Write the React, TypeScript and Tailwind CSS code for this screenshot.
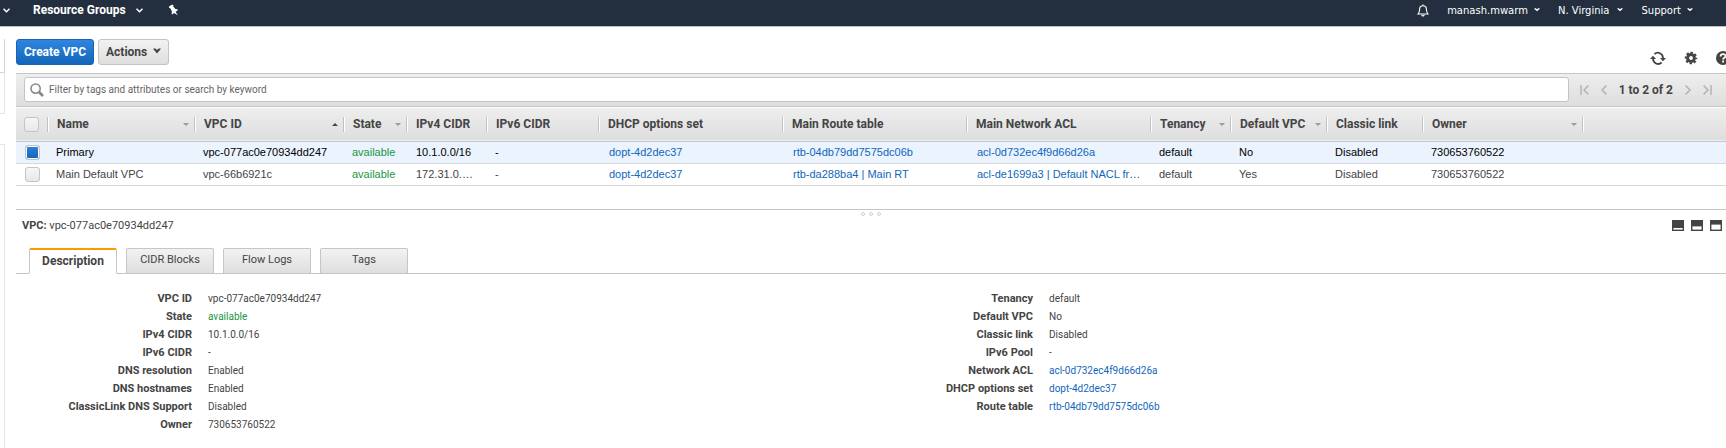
import type { ReactNode } from "react";

const link = "text-[#1166bb] hover:underline";

function Chevron({ className = "" }: { className?: string }) {
  return (
    <svg viewBox="0 0 7 5" className={`h-[5px] w-[7px] ${className}`} fill="none" stroke="currentColor" strokeWidth="1.5" aria-hidden="true">
      <path d="M0.5 0.8 L3.5 3.8 L6.5 0.8" />
    </svg>
  );
}

function TopNav() {
  return (
    <header className="flex h-[27px] items-start border-b border-[#bfbfbf] bg-[#232f3e] pr-[33px] pl-[3px] text-white">
      <nav className="flex h-5 flex-1 items-center">
        <button aria-label="Services" className="flex"><Chevron /></button>
        <button className="ml-[23px] flex items-center gap-[10px] text-[12px] leading-5 font-bold">
          Resource Groups
          <Chevron />
        </button>
        <button aria-label="Pin shortcuts" className="ml-[25px]">
          <svg viewBox="0 0 11 12" className="h-3 w-[11px]" fill="currentColor" aria-hidden="true">
            <path d="M1 2.6 L4.2 0.4 L5.6 1.4 L5.2 2.4 L7.4 5 L9.4 5.2 L9.8 6.2 L7.6 7.8 L9.8 11.2 L6 8.9 L4.2 10.4 L3.6 9.8 L3.9 7.6 L2.3 4.3 L1.1 4 Z" />
          </svg>
        </button>
      </nav>
      <div className="flex h-5 items-center font-['DejaVu_Sans'] text-[10px]">
        <button aria-label="Notifications" className="mr-[18px]">
          <svg viewBox="0 0 12 13" className="h-[13px] w-3" fill="none" stroke="currentColor" strokeWidth="1.1" aria-hidden="true">
            <path d="M6 0.4 V1.6 M1 10 C2.3 8.6 2.6 7.6 2.6 5.2 C2.6 3 4 1.7 6 1.7 C8 1.7 9.4 3 9.4 5.2 C9.4 7.6 9.7 8.6 11 10 Z M4.8 10.8 C5 12.2 7 12.2 7.2 10.8" />
          </svg>
        </button>
        <button className="mr-[18px] flex items-center gap-[6px]">manash.mwarm<Caret /></button>
        <button className="mr-[18px] flex items-center gap-2">N. Virginia<Caret /></button>
        <button className="flex items-center gap-[6px]">Support<Caret /></button>
      </div>
    </header>
  );
}

function Caret() {
  return (
    <svg viewBox="0 0 6 4" className="h-1 w-[6px]" fill="currentColor" aria-hidden="true">
      <path d="M0.4 0.2 H1.8 L3 1.2 L4.2 0.2 H5.6 V0.9 L3 3.2 L0.4 0.9 Z" />
    </svg>
  );
}

function SideRail() {
  return (
    <aside className="flex w-[5px] shrink-0 flex-col">
      <div className="mt-3 h-[34px] border-r border-b border-[#d5d5d5]" />
      <div className="h-[41px] border-r border-b border-[#e4e4e4]" />
      <div className="mt-[30px] flex-1 border-t border-r border-[#e4e4e4]" />
    </aside>
  );
}

function Toolbar() {
  return (
    <div className="flex items-start pt-3 font-bold">
      <button className="h-[26px] rounded-[3px] border border-[#1a62b5] bg-linear-to-b from-[#2f86de] to-[#1166bb] px-[7px] text-[12px] text-white">
        Create VPC
      </button>
      <button className="ml-1 flex h-[26px] items-center gap-[6px] rounded-[3px] border border-[#c4c4c4] bg-linear-to-b from-[#f2f2f2] to-[#dedede] px-[7px] text-[12px] text-[#444]">
        Actions
        <svg viewBox="0 0 8 6" className="mb-[2px] h-[6px] w-2" fill="currentColor" aria-hidden="true">
          <path d="M0.4 0.4 H2.4 L4 2 L5.6 0.4 H7.6 V1.2 L4 5.4 L0.4 1.2 Z" />
        </svg>
      </button>
      <div className="-mr-[4px] ml-auto flex items-center gap-[18px] pt-3 text-[#444]">
        <button aria-label="Refresh">
          <svg viewBox="0 0 16 14" className="h-[14px] w-4" fill="none" stroke="currentColor" strokeWidth="1.8" aria-hidden="true">
            <path d="M4.4 3.2 A5 5 0 0 1 12.9 7 M11.6 11.5 A5 5 0 0 1 3.1 7.6" />
            <path d="M10 7 H16 L13 10.2 Z M0 8 H6 L3 4.8 Z" fill="currentColor" stroke="none" />
          </svg>
        </button>
        <button aria-label="Settings">
          <svg viewBox="0 0 14 14" className="h-[14px] w-[14px]" fill="none" stroke="currentColor" aria-hidden="true">
            <circle cx="7" cy="7" r="3.4" strokeWidth="3" />
            <circle cx="7" cy="7" r="5.4" strokeWidth="1.8" strokeDasharray="2.4 1.841" strokeDashoffset="1.2" />
          </svg>
        </button>
        <button aria-label="Help">
          <svg viewBox="0 0 14 14" className="h-[14px] w-[14px]" aria-hidden="true">
            <circle cx="7" cy="7" r="7" fill="currentColor" />
            <path d="M4.6 5.4 C4.6 2.4 9.6 2.4 9.5 5.2 C9.4 6.8 7.1 6.9 7.1 8.6 M7.1 9.6 V11.4" fill="none" stroke="#fff" strokeWidth="1.8" />
          </svg>
        </button>
      </div>
    </div>
  );
}

function PageIcon({ d, label, wide }: { d: string; label: string; wide?: boolean }) {
  return (
    <button aria-label={label} className="text-[#b4b4b4]">
      <svg viewBox={wide ? "0 0 9 10" : "0 0 6 10"} className={wide ? "h-[10px] w-[9px]" : "h-[10px] w-[6px]"} fill="none" stroke="currentColor" strokeWidth="1.5" aria-hidden="true">
        <path d={d} />
      </svg>
    </button>
  );
}

function FilterBar() {
  return (
    <div className="mt-2 flex h-[34px] items-center border-y border-[#c6c6c6] bg-linear-to-b from-[#eeeeee] to-[#dedede] pr-[14px] pb-px pl-2">
      <label className="flex h-[25px] flex-1 items-center rounded-[3px] border border-[#c4c4c4] bg-white pl-[5px]">
        <svg viewBox="0 0 14 14" className="h-[14px] w-[14px] text-[#888]" fill="none" stroke="currentColor" aria-hidden="true">
          <circle cx="5.6" cy="5.6" r="4.6" strokeWidth="1.6" />
          <path d="M9 9 L13 13" strokeWidth="2.6" />
        </svg>
        <input
          aria-label="Filter VPCs"
          placeholder="Filter by tags and attributes or search by keyword"
          className="ml-[5px] min-w-0 flex-1 bg-transparent text-[10px] outline-none placeholder:text-[#666]"
        />
      </label>
      <div className="ml-[11px] flex items-center text-[12px] font-bold text-[#444]">
        <PageIcon label="First page" wide d="M1 0 V10 M8.4 0.6 L4 5 L8.4 9.4" />
        <span className="w-3" />
        <PageIcon label="Previous page" d="M5.4 0.6 L1 5 L5.4 9.4" />
        <span className="mx-3">1 to 2 of 2</span>
        <PageIcon label="Next page" d="M0.6 0.6 L5 5 L0.6 9.4" />
        <span className="w-3" />
        <PageIcon label="Last page" wide d="M8 0 V10 M0.6 0.6 L5 5 L0.6 9.4" />
      </div>
    </div>
  );
}

type Column = { title: string; width: string; pad: string; sort?: "asc" | "none" };

const columns: Column[] = [
  { title: "Name", width: "w-[147px]", pad: "pr-2 pl-[7px]", sort: "none" },
  { title: "VPC ID", width: "w-[149px]", pad: "pr-2 pl-[7px]", sort: "asc" },
  { title: "State", width: "w-[63px]", pad: "pr-2 pl-[7px]", sort: "none" },
  { title: "IPv4 CIDR", width: "w-[80px]", pad: "pr-[14px] pl-2" },
  { title: "IPv6 CIDR", width: "w-[112px]", pad: "pr-2 pl-[7px]" },
  { title: "DHCP options set", width: "w-[184px]", pad: "pr-2 pl-[9px]" },
  { title: "Main Route table", width: "w-[184px]", pad: "pr-2 pl-[9px]" },
  { title: "Main Network ACL", width: "w-[184px]", pad: "pr-2 pl-[9px]" },
  { title: "Tenancy", width: "w-[80px]", pad: "pr-2 pl-[7px]", sort: "none" },
  { title: "Default VPC", width: "w-[96px]", pad: "pr-2 pl-[7px]", sort: "none" },
  { title: "Classic link", width: "w-[96px]", pad: "pr-2 pl-[7px]" },
  { title: "Owner", width: "w-[160px]", pad: "pr-2 pl-[7px]", sort: "none" },
];

const A = ({ children }: { children: ReactNode }) => <a href="#" className={link}>{children}</a>;
const available = <span className="text-[#1a9641]">available</span>;

const rows: { selected: boolean; cells: ReactNode[] }[] = [
  {
    selected: true,
    cells: ["Primary", "vpc-077ac0e70934dd247", available, "10.1.0.0/16", "-", <A>dopt-4d2dec37</A>, <A>rtb-04db79dd7575dc06b</A>, <A>acl-0d732ec4f9d66d26a</A>, "default", "No", "Disabled", "730653760522"],
  },
  {
    selected: false,
    cells: ["Main Default VPC", "vpc-66b6921c", available, "172.31.0.0/16", "-", <A>dopt-4d2dec37</A>, <A>rtb-da288ba4 | Main RT</A>, <A>acl-de1699a3 | Default NACL from</A>, "default", "Yes", "Disabled", "730653760522"],
  },
];

function Check({ label, checked }: { label: string; checked?: boolean }) {
  return (
    <input
      type="checkbox"
      aria-label={label}
      defaultChecked={checked}
      className="block h-[15px] w-[15px] appearance-none rounded-[3px] border border-[#c4c4c4] bg-linear-to-b from-[#f6f6f6] to-[#e8e8e8] checked:from-[#2f80d8] checked:to-[#1166bb] checked:shadow-[inset_0_0_0_1px_#fff]"
    />
  );
}

function VpcTable() {
  return (
    <table className="mt-px w-full table-fixed border-collapse font-['Liberation_Sans'] text-[11px] text-[#444]">
      <thead>
        <tr className="h-[33px] border-b border-[#c6c6c6] bg-linear-to-b from-[#eeeeee] to-[#dedede] font-['Roboto']">
          <th className="w-[33px] p-0">
            <div className="flex h-[15px] items-center border-r border-white pl-2 shadow-[inset_-1px_0_0_#c0c0c0]">
              <Check label="Select all" />
            </div>
          </th>
          {columns.map((c) => (
            <th key={c.title} className={`p-0 text-left ${c.width}`}>
              <div className="flex h-[15px] items-center justify-between border-r border-white pr-[6px] pl-2 text-[12px] font-bold whitespace-nowrap shadow-[inset_-1px_0_0_#c0c0c0]">
                {c.title}
                {c.sort && (
                  <svg viewBox="0 0 6 3" className={c.sort === "asc" ? "h-[3px] w-[6px] text-[#444]" : "h-[3px] w-[6px] text-[#999]"} fill="currentColor" aria-hidden="true">
                    <path d={c.sort === "asc" ? "M0 3 L3 0 L6 3 Z" : "M0 0 L3 3 L6 0 Z"} />
                  </svg>
                )}
              </div>
            </th>
          ))}
          <th className="p-0" />
        </tr>
      </thead>
      <tbody>
        {rows.map((r, i) => (
          <tr key={i} className={`h-[22px] border-b border-[#d8d8d8] ${r.selected ? "bg-[#eaf3fe] text-black" : ""}`}>
            <td className="p-0 pl-[9px]"><Check label={`Select row ${i + 1}`} checked={r.selected} /></td>
            {r.cells.map((cell, j) => (
              <td key={j} className={`truncate py-0 ${columns[j].pad}`}>{cell}</td>
            ))}
            <td className="p-0" />
          </tr>
        ))}
      </tbody>
    </table>
  );
}

function PaneIcon({ label, y }: { label: string; y: number }) {
  return (
    <button aria-label={label}>
      <svg viewBox="0 0 12 11" className="h-[11px] w-3" aria-hidden="true">
        <rect width="12" height="11" fill="#444" />
        <rect x="1.4" y={y} width="9.2" height={9.6 - y} fill="#fff" />
      </svg>
    </button>
  );
}

const left: [string, ReactNode][] = [
  ["VPC ID", "vpc-077ac0e70934dd247"],
  ["State", available],
  ["IPv4 CIDR", "10.1.0.0/16"],
  ["IPv6 CIDR", "-"],
  ["DNS resolution", "Enabled"],
  ["DNS hostnames", "Enabled"],
  ["ClassicLink DNS Support", "Disabled"],
  ["Owner", "730653760522"],
];

const right: [string, ReactNode][] = [
  ["Tenancy", "default"],
  ["Default VPC", "No"],
  ["Classic link", "Disabled"],
  ["IPv6 Pool", "-"],
  ["Network ACL", <A>acl-0d732ec4f9d66d26a</A>],
  ["DHCP options set", <A>dopt-4d2dec37</A>],
  ["Route table", <A>rtb-04db79dd7575dc06b</A>],
];

function Details({ items }: { items: [string, ReactNode][] }) {
  return (
    <dl>
      {items.map(([k, v]) => (
        <div key={k} className="flex gap-4 leading-[18px]">
          <dt className="w-[176px] text-right text-[11px] font-bold">{k}</dt>
          <dd className="text-[10px]">{v}</dd>
        </div>
      ))}
    </dl>
  );
}

function DetailPane() {
  const tabs = ["CIDR Blocks", "Flow Logs", "Tags"];
  return (
    <section className="mt-[23px] border-t border-[#c6c6c6] text-[#444]">
      <div className="flex h-2 items-center justify-center gap-1" role="separator">
        <i className="h-1 w-1 rounded-full border border-[#d0d0d0]" />
        <i className="h-1 w-1 rounded-full border border-[#d0d0d0]" />
        <i className="h-1 w-1 rounded-full border border-[#d0d0d0]" />
      </div>
      <div className="flex items-center pr-1 pl-[6px] leading-4">
        <h2 className="flex-1 text-[11px]"><b>VPC:</b> vpc-077ac0e70934dd247</h2>
        <div className="flex gap-[7px]">
          <PaneIcon label="Minimize panel" y={8} />
          <PaneIcon label="Half panel" y={6.4} />
          <PaneIcon label="Maximize panel" y={4.6} />
        </div>
      </div>
      <div role="tablist" className="mt-[14px] flex gap-[9px] border-b border-[#c6c6c6] pl-[13px] text-[11px]">
        <button role="tab" aria-selected="true" className="-mb-px h-[26px] w-[88px] rounded-t-[2px] border border-t-2 border-[#c6c6c6] border-t-[#ff9900] border-b-white bg-white text-[12px] font-bold">
          Description
        </button>
        {tabs.map((t) => (
          <button key={t} role="tab" aria-selected="false" className="h-[25px] w-[88px] rounded-t-[2px] border border-b-0 border-[#c6c6c6] bg-linear-to-b from-[#f2f2f2] to-[#dedede]">
            {t}
          </button>
        ))}
      </div>
      <div className="grid grid-cols-2 pt-4 pr-7">
        <Details items={left} />
        <Details items={right} />
      </div>
    </section>
  );
}

export default function App() {
  return (
    <div className="flex min-h-screen flex-col overflow-hidden bg-white font-['Roboto',sans-serif]">
      <TopNav />
      <div className="flex flex-1">
        <SideRail />
        <main className="min-w-0 flex-1 pl-[11px]">
          <Toolbar />
          <FilterBar />
          <VpcTable />
          <DetailPane />
        </main>
      </div>
    </div>
  );
}
